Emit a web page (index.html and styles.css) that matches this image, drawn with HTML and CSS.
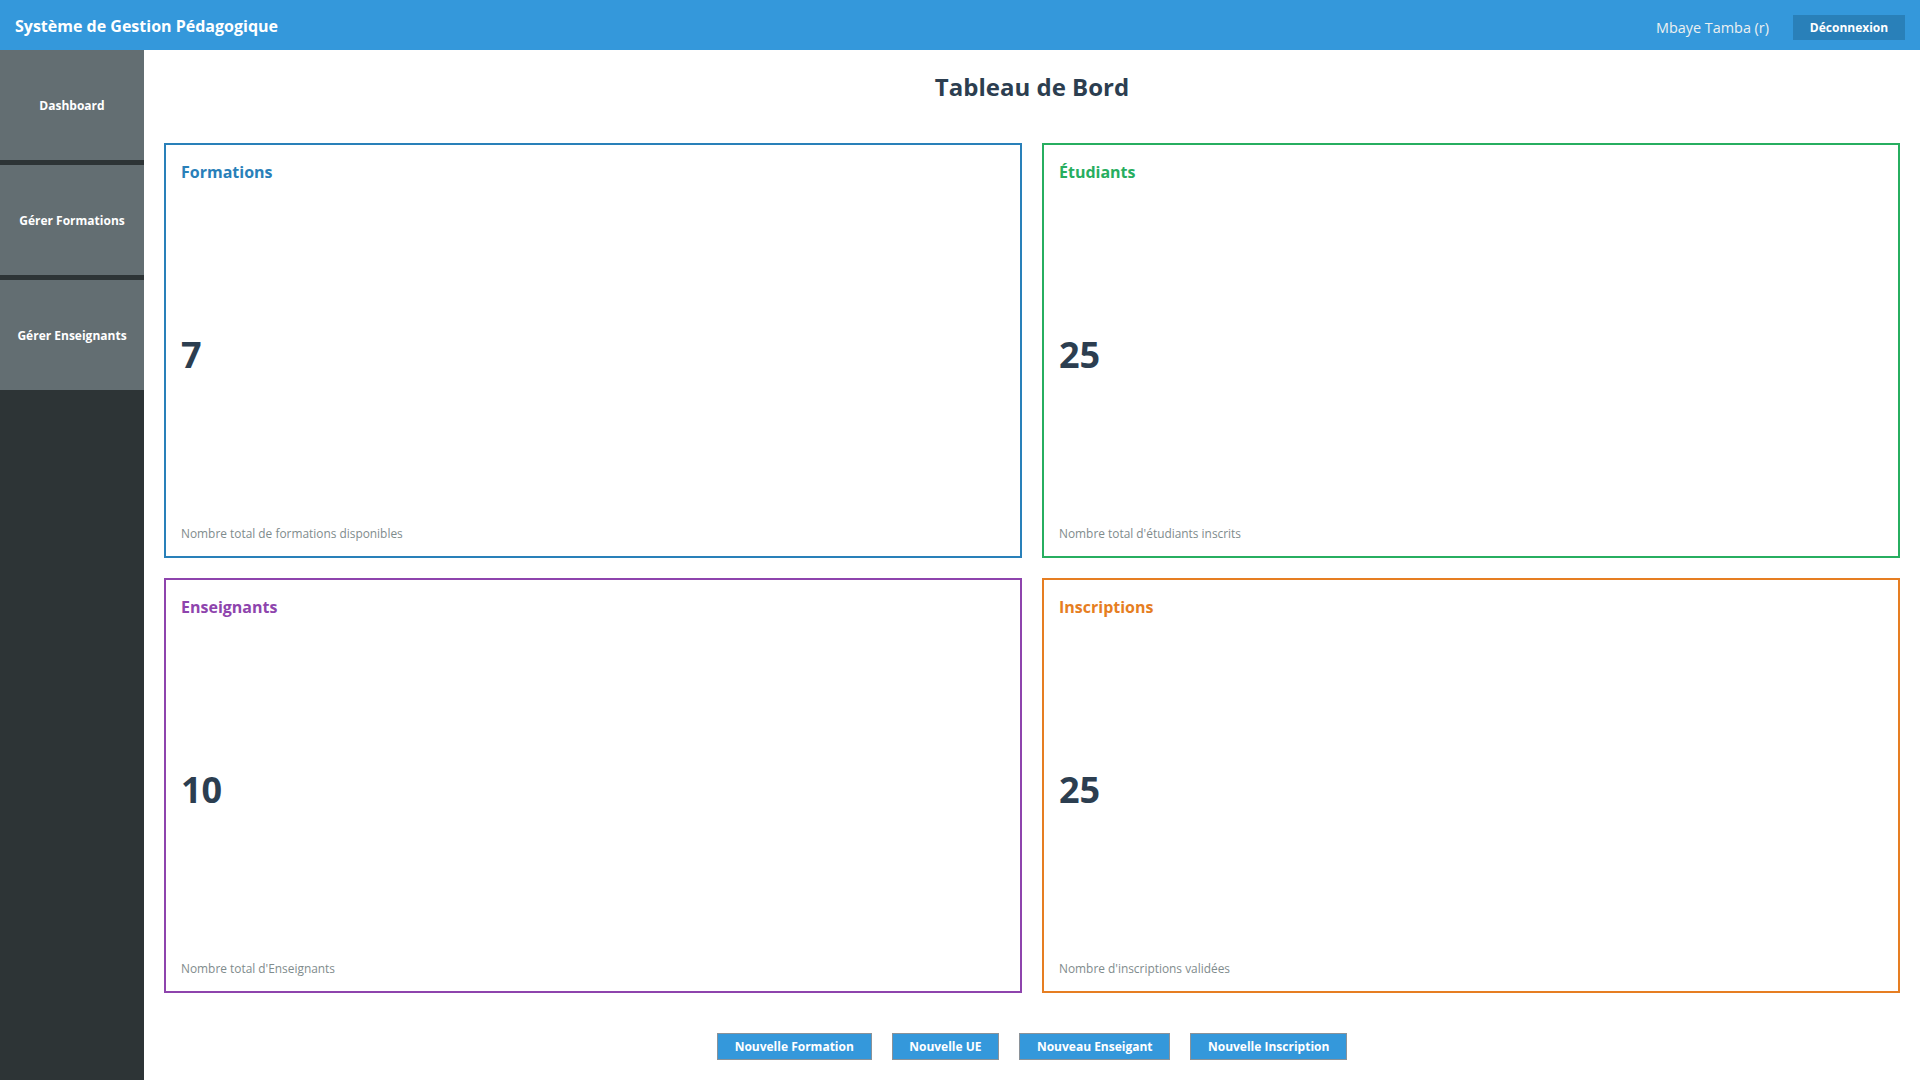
FILE: index.html
```html
<!DOCTYPE html>
<html lang="fr">
<head>
<meta charset="utf-8">
<title>Système de Gestion Pédagogique</title>
<link rel="stylesheet" href="styles.css">
</head>
<body>
<header class="topbar">
  <div class="brand">Système de Gestion Pédagogique</div>
  <div class="user-area">
    <span class="user-name">Mbaye Tamba (r)</span>
    <button class="logout">Déconnexion</button>
  </div>
</header>
<div class="layout">
  <nav class="sidebar">
    <a class="nav-item">Dashboard</a>
    <a class="nav-item">Gérer Formations</a>
    <a class="nav-item">Gérer Enseignants</a>
  </nav>
  <main class="content">
    <h1 class="page-title">Tableau de Bord</h1>
    <section class="cards">
      <div class="card card-blue">
        <h3 class="card-title">Formations</h3>
        <div class="card-value">7</div>
        <p class="card-desc">Nombre total de formations disponibles</p>
      </div>
      <div class="card card-green">
        <h3 class="card-title">Étudiants</h3>
        <div class="card-value">25</div>
        <p class="card-desc">Nombre total d'étudiants inscrits</p>
      </div>
      <div class="card card-purple">
        <h3 class="card-title">Enseignants</h3>
        <div class="card-value">10</div>
        <p class="card-desc">Nombre total d'Enseignants</p>
      </div>
      <div class="card card-orange">
        <h3 class="card-title">Inscriptions</h3>
        <div class="card-value">25</div>
        <p class="card-desc">Nombre d'inscriptions validées</p>
      </div>
    </section>
    <div class="actions">
      <button class="action-btn">Nouvelle Formation</button>
      <button class="action-btn">Nouvelle UE</button>
      <button class="action-btn">Nouveau Enseigant</button>
      <button class="action-btn">Nouvelle Inscription</button>
    </div>
  </main>
</div>
</body>
</html>
```

FILE: styles.css
```css
* { box-sizing: border-box; }

html, body {
  margin: 0;
  padding: 0;
  height: 100%;
  overflow: hidden;
}

body {
  font-family: "Open Sans", "Noto Sans", sans-serif;
  background: #ffffff;
  color: #2c3e50;
}

.topbar {
  height: 50px;
  background: #3498db;
  display: flex;
  align-items: center;
  justify-content: space-between;
  padding: 0 15px;
}

.brand {
  color: #ffffff;
  font-weight: 700;
  font-size: 16px;
  padding-top: 2px;
}

.user-area {
  display: flex;
  align-items: center;
  gap: 24px;
  padding-top: 5px;
}

.user-name {
  color: #ecf0f1;
  font-size: 14.4px;
}

.logout {
  font-family: inherit;
  background: #2980b9;
  color: #ffffff;
  border: none;
  font-weight: 700;
  font-size: 12px;
  width: 112px;
  height: 25px;
  padding: 0;
}

.layout {
  display: flex;
  height: calc(100vh - 50px);
}

.sidebar {
  width: 144px;
  flex-shrink: 0;
  background: #2d3436;
  display: flex;
  flex-direction: column;
}

.nav-item {
  height: 110px;
  margin-bottom: 5px;
  background: #636e72;
  color: #ffffff;
  font-weight: 700;
  font-size: 12px;
  display: flex;
  align-items: center;
  justify-content: center;
  text-decoration: none;
}

.content {
  flex: 1;
  padding: 20px 20px 0;
  display: flex;
  flex-direction: column;
}

.page-title {
  margin: 0 0 40px;
  text-align: center;
  font-size: 24px;
  line-height: 33px;
  font-weight: 700;
  color: #2c3e50;
}

.cards {
  display: grid;
  grid-template-columns: 1fr 1fr;
  grid-template-rows: 415px 415px;
  gap: 20px;
}

.card {
  border: 2px solid;
  padding: 15px 15px 15px;
  display: flex;
  flex-direction: column;
  justify-content: space-between;
}

.card-title {
  margin: 0;
  font-size: 16px;
  font-weight: 700;
  padding-top: 1px;
}

.card-value {
  font-size: 36px;
  font-weight: 700;
  color: #2c3e50;
}

.card-desc {
  margin: 0;
  font-size: 11.9px;
  color: #7f8c8d;
}

.card-blue { border-color: #2980b9; }
.card-blue .card-title { color: #2980b9; }
.card-green { border-color: #27ae60; }
.card-green .card-title { color: #27ae60; }
.card-purple { border-color: #8e44ad; }
.card-purple .card-title { color: #8e44ad; }
.card-orange { border-color: #e67e22; }
.card-orange .card-title { color: #e67e22; }

.actions {
  margin-top: 40px;
  display: flex;
  justify-content: center;
  gap: 20px;
}

.action-btn {
  font-family: inherit;
  background: #3498db;
  color: #ffffff;
  border: 1px solid #8a9299;
  font-weight: 700;
  font-size: 12px;
  padding: 5px 16.7px;
  line-height: 15px;
}
```
